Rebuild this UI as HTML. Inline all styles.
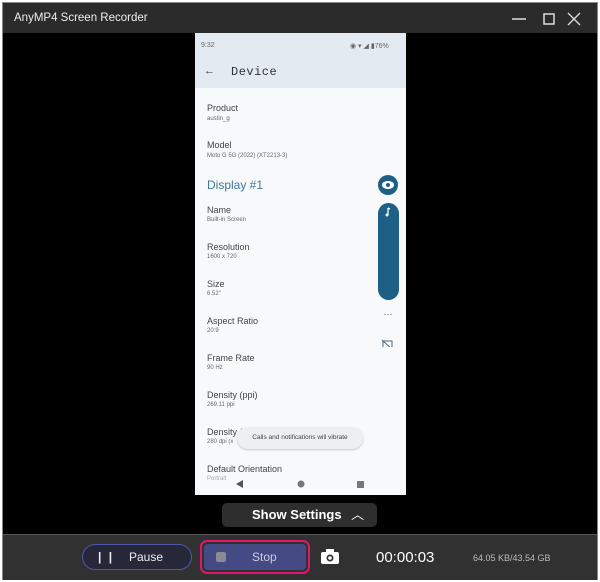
<!DOCTYPE html>
<html><head><meta charset="utf-8"><style>
*{margin:0;padding:0;box-sizing:border-box}
body{width:600px;height:582px;background:#fff;font-family:"Liberation Sans",sans-serif;overflow:hidden;position:relative}
.win{position:absolute;left:2px;top:2px;width:596px;height:578px;background:#000;border:1px solid #888}
.title{position:absolute;left:0;top:0;width:594px;height:30px;background:#2b2b2b;color:#eee;font-size:11.5px;line-height:30px;padding-left:11px}
.phone{position:absolute;left:192px;top:30px;width:211px;height:462px;background:#f8f9fb}
.hdr{position:absolute;left:0;top:0;width:211px;height:55px;background:#e3eaf2}
.t{position:absolute;font-size:9px;color:#444;line-height:11px}
.s{position:absolute;font-size:6px;color:#666}
.bot{position:absolute;left:0;top:531px;width:594px;height:46px;background:#313131;border-top:1px solid #555}
</style></head><body>
<div class="win">
<div class="title">AnyMP4 Screen Recorder
<svg style="position:absolute;left:505px;top:9px" width="80" height="14"><line x1="4" y1="7" x2="18" y2="7" stroke="#ddd" stroke-width="1.5"/><rect x="36" y="2" width="10" height="10" fill="none" stroke="#ddd" stroke-width="1.5"/><path d="M60 1L72 13M72 1L60 13" stroke="#ddd" stroke-width="1.3"/></svg></div>
<div class="phone">
<div class="hdr">
<div class="s" style="left:6px;top:9px;font-size:7px">9:32</div>
<div class="s" style="left:155px;top:9px;font-size:7px">◉ ▾ ◢ ▮76%</div>
<div style="position:absolute;left:9px;top:32px;font-size:11px;color:#333">←</div>
<div style="position:absolute;left:36px;top:32px;font-size:12px;color:#333;font-family:'Liberation Mono',monospace;letter-spacing:0.5px">Device</div>
</div>
<div class="t" style="left:12px;top:70px">Product</div><div class="s" style="left:12px;top:83px">austin_g</div>
<div class="t" style="left:12px;top:107px">Model</div><div class="s" style="left:12px;top:120px">Moto G 5G (2022) (XT2213-3)</div>
<div style="position:absolute;left:12px;top:145px;font-size:12px;color:#3f7896">Display #1</div>
<div class="t" style="left:12px;top:172px">Name</div><div class="s" style="left:12px;top:184px">Built-in Screen</div>
<div class="t" style="left:12px;top:209px">Resolution</div><div class="s" style="left:12px;top:221px">1600 x 720</div>
<div class="t" style="left:12px;top:246px">Size</div><div class="s" style="left:12px;top:258px">6.52"</div>
<div class="t" style="left:12px;top:283px">Aspect Ratio</div><div class="s" style="left:12px;top:295px">20:9</div>
<div class="t" style="left:12px;top:320px">Frame Rate</div><div class="s" style="left:12px;top:332px">90 Hz</div>
<div class="t" style="left:12px;top:357px">Density (ppi)</div><div class="s" style="left:12px;top:369px">269.11 ppi</div>
<div class="t" style="left:12px;top:394px">Density (</div><div class="s" style="left:12px;top:406px">280 dpi (x</div>
<div style="position:absolute;left:42px;top:394px;width:126px;height:22px;border-radius:11px;background:#eeeff1;font-size:6.5px;color:#444;line-height:22px;text-align:center;box-shadow:0 1px 2px rgba(0,0,0,.2)">Calls and notifications will vibrate</div>
<div class="t" style="left:12px;top:431px">Default Orientation</div><div class="s" style="left:12px;top:443px;color:#aaa">Portrait</div>
<svg style="position:absolute;left:0;top:440px" width="211" height="20"><path d="M41 11L48 7V15Z" fill="#555"/><circle cx="106" cy="11" r="3.5" fill="#777"/><rect x="162" y="8" width="7" height="7" fill="#777"/></svg>
<svg style="position:absolute;left:180px;top:139px" width="26" height="175">
<circle cx="13" cy="13" r="10" fill="#1e5f85"/><ellipse cx="13" cy="13" rx="6" ry="4" fill="#fff"/><circle cx="13" cy="13" r="2" fill="#1e5f85"/>
<rect x="3" y="31" width="21" height="97" rx="10.5" fill="#1e5f85"/><path d="M13 36V43M13 36L15 37" stroke="#fff" stroke-width="1.3"/><circle cx="12" cy="43" r="1.5" fill="#fff"/>
<text x="13" y="145" font-size="9" fill="#555" text-anchor="middle">···</text>
<rect x="8" y="169" width="9" height="7" fill="none" stroke="#567" stroke-width="1"/><path d="M7 168L18 178" stroke="#567"/>
</svg>
</div>
<div style="position:absolute;left:219px;top:500px;width:155px;height:24px;background:#2e2e2e;border-radius:5px;color:#fff;font-size:13px;font-weight:bold;line-height:24px;padding-left:30px">Show Settings <span style="font-weight:normal;margin-left:6px">︿</span></div>
<div class="bot">
<div style="position:absolute;left:79px;top:9px;width:110px;height:26px;border:1px solid #4f56a8;border-radius:13px;background:#26283a;color:#eee;font-size:12px;line-height:24px"><span style="position:absolute;left:15px;font-weight:bold;letter-spacing:2px">| |</span><span style="position:absolute;left:46px">Pause</span></div>
<div style="position:absolute;left:197px;top:5px;width:110px;height:34px;border:2px solid #e0176f;border-radius:7px;padding:2px"><div style="width:100%;height:100%;background:#444b84;border-radius:4px;color:#ccd;font-size:12px;line-height:26px;position:relative"><span style="position:absolute;left:12px;top:8px;width:10px;height:10px;background:#8a8a95;border-radius:2px"></span><span style="position:absolute;left:48px">Stop</span></div></div>
<svg style="position:absolute;left:318px;top:14px" width="18" height="15"><rect x="0" y="3" width="18" height="12" rx="2" fill="#fff"/><rect x="5" y="0" width="8" height="4" fill="#fff"/><circle cx="9" cy="9" r="3.5" fill="#313131"/><circle cx="9" cy="9" r="1.8" fill="#fff"/></svg>
<div style="position:absolute;left:373px;top:14px;color:#fff;font-size:15px">00:00:03</div>
<div style="position:absolute;left:470px;top:18px;color:#bbb;font-size:9px">64.05 KB/43.54 GB</div>
</div>
</div>
</body></html>
